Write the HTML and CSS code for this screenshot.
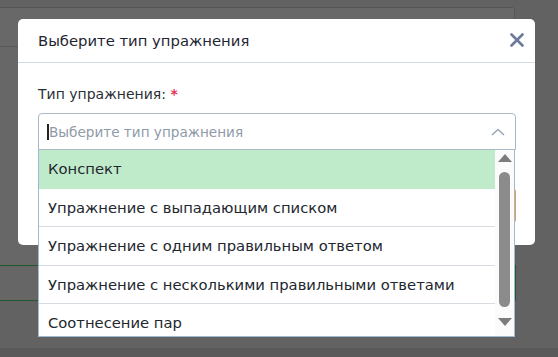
FILE: index.html
```html
<!DOCTYPE html>
<html>
<head>
  <title>Выберите тип упражнения</title>
  <link rel="stylesheet" href="styles.css">
</head>
<body>
  <div class="page">
    <div class="card">
      <div class="card-head"></div>
    </div>
    <div class="green-row"></div>
    <div class="page-bottom"></div>
  </div>

  <div class="modal">
    <div class="modal-header">
      <h2>Выберите тип упражнения</h2>
      <svg class="close" width="14" height="14" viewBox="0 0 14 14">
        <path d="M1.5 1.5 L12.5 12.5 M12.5 1.5 L1.5 12.5" stroke="#6b7a99" stroke-width="2.6" stroke-linecap="round"/>
      </svg>
    </div>
    <div class="modal-body">
      <label class="field-label">Тип упражнения: <span class="req">*</span></label>
      <div class="select">
        <span class="caret"></span>
        <span class="placeholder">Выберите тип упражнения</span>
        <svg class="chevron" width="14" height="8" viewBox="0 0 14 8">
          <path d="M1 7 L7 1.5 L13 7" fill="none" stroke="#9aa8b6" stroke-width="1.6"/>
        </svg>
      </div>
      <div class="next-field"></div>
    </div>
  </div>

  <div class="dropdown">
    <ul class="options">
      <li class="active">Конспект</li>
      <li>Упражнение с выпадающим списком</li>
      <li>Упражнение с одним правильным ответом</li>
      <li>Упражнение с несколькими правильными ответами</li>
      <li>Соотнесение пар</li>
    </ul>
    <div class="scrollbar">
      <span class="arrow up"></span>
      <span class="thumb"></span>
      <span class="arrow down"></span>
    </div>
  </div>
</body>
</html>
```
FILE: styles.css
```css
body {
  margin: 0;
  padding: 0;
  width: 558px;
  height: 357px;
  overflow: hidden;
  position: relative;
  font-family: "DejaVu Sans", sans-serif;
  background-color: #626262;
  color: #212529;
}
.page {
  height: 357px;
  display: flex;
  flex-direction: column;
}
.card {
  margin-top: 7px;
  width: 515px;
  height: 258px;
  border-top: 1px solid #545454;
  border-right: 1px solid #545454;
  border-radius: 0 4px 0 0;
  background-color: #676767;
  box-sizing: border-box;
}
.card-head {
  height: 38px;
  border-bottom: 1px solid #585858;
  background-color: #686868;
}
.green-row {
  width: 516px;
  height: 36px;
  border-top: 1px solid #1f5a2e;
  border-bottom: 1px solid #1f5a2e;
  border-right: 1px solid #1f5a2e;
  box-sizing: border-box;
  background-color: #666666;
}
.page-bottom {
  margin-top: 47px;
  flex: 1;
  background-color: #5a5a5a;
}
.modal {
  position: absolute;
  left: 18px;
  top: 19px;
  width: 517px;
  height: 226px;
  background-color: #ffffff;
  border-radius: 5px;
}
.modal-header {
  height: 43px;
  border-bottom: 1px solid #d3dbe3;
  display: flex;
  align-items: center;
  justify-content: space-between;
  padding: 0 11px 0 20px;
}
.modal-header h2 {
  margin: 0;
  font-size: 14.8px;
  font-weight: normal;
  color: #1f2633;
}
.close {
  margin-top: -2px;
}
.modal-body {
  padding: 21px 19px 0 20px;
}
.field-label {
  display: block;
  font-size: 14px;
  color: #2a2f36;
  line-height: 20px;
  margin-bottom: 9px;
}
.req {
  color: #e8325a;
  font-weight: bold;
}
.select {
  height: 37px;
  border: 1px solid #aab9c7;
  border-radius: 4px 4px 0 0;
  box-sizing: border-box;
  display: flex;
  align-items: center;
  padding: 0 10px 0 8px;
}
.caret {
  width: 2px;
  height: 16px;
  background-color: #222;
}
.placeholder {
  flex: 1;
  font-size: 13.6px;
  color: #8e9aa8;
}
.next-field {
  margin-top: 38px;
  height: 35px;
  border-left: 2px solid #9a9a9a;
  border-right: 2px solid #e2a04a;
  border-radius: 4px;
}
.dropdown {
  position: absolute;
  left: 38px;
  top: 150px;
  width: 477px;
  height: 187px;
  border: 1px solid #9fbad4;
  border-top: none;
  background-color: #ffffff;
  display: flex;
  overflow: hidden;
  box-sizing: border-box;
}
.options {
  list-style: none;
  margin: 0;
  padding: 0;
  flex: 1;
}
.options li {
  height: 38.5px;
  box-sizing: border-box;
  border-bottom: 1px solid #d6dce2;
  display: flex;
  align-items: center;
  padding-left: 9px;
  font-size: 14.75px;
  color: #22272e;
}
.options li.active {
  background-color: #c0ebcb;
  border-bottom-color: #c0ebcb;
}
.scrollbar {
  width: 19px;
  background-color: #fbfbfb;
  display: flex;
  flex-direction: column;
  align-items: center;
}
.arrow {
  width: 0;
  height: 0;
  border-left: 7px solid transparent;
  border-right: 7px solid transparent;
}
.arrow.up {
  margin-top: 4px;
  border-bottom: 8px solid #7c7c7c;
}
.arrow.down {
  margin-top: 11px;
  border-top: 8px solid #7c7c7c;
}
.thumb {
  margin-top: 10px;
  width: 11px;
  height: 135px;
  border-radius: 6px;
  background-color: #8b8b8b;
}
```
